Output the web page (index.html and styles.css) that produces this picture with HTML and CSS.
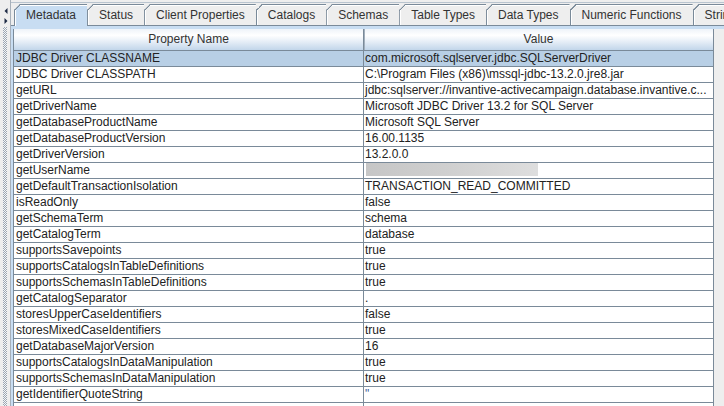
FILE: index.html
```html
<!DOCTYPE html>
<html>
<head>
<meta charset="utf-8">
<link rel="stylesheet" href="styles.css">
</head>
<body>
<div class="app">
  <div class="splitter">
    <svg class="arrows" width="4" height="16" viewBox="0 0 4 16">
      <path d="M3.5 0 L0.5 3 L3.5 6 Z" fill="#1e2b45"/>
      <path d="M0.5 10 L3.5 13 L0.5 16 Z" fill="#1e2b45"/>
    </svg>
    <div class="bumps"></div>
  </div>
  <div class="tabpane">
    <div class="tabs">
      <div class="tab selected">Metadata</div>
      <div class="tab">Status</div>
      <div class="tab">Client Properties</div>
      <div class="tab">Catalogs</div>
      <div class="tab">Schemas</div>
      <div class="tab">Table Types</div>
      <div class="tab">Data Types</div>
      <div class="tab">Numeric Functions</div>
      <div class="tab">String Functions</div>
    </div>
    <div class="content">
      <div class="viewport">
        <div class="grid">
          <div class="head">
            <div class="hcell">Property Name</div>
            <div class="hcell">Value</div>
          </div>
          <div class="row sel"><div class="cell">JDBC Driver CLASSNAME</div><div class="cell">com.microsoft.sqlserver.jdbc.SQLServerDriver</div></div>
          <div class="row"><div class="cell">JDBC Driver CLASSPATH</div><div class="cell">C:\Program Files (x86)\mssql-jdbc-13.2.0.jre8.jar</div></div>
          <div class="row"><div class="cell">getURL</div><div class="cell">jdbc:sqlserver://invantive-activecampaign.database.invantive.c...</div></div>
          <div class="row"><div class="cell">getDriverName</div><div class="cell">Microsoft JDBC Driver 13.2 for SQL Server</div></div>
          <div class="row"><div class="cell">getDatabaseProductName</div><div class="cell">Microsoft SQL Server</div></div>
          <div class="row"><div class="cell">getDatabaseProductVersion</div><div class="cell">16.00.1135</div></div>
          <div class="row"><div class="cell">getDriverVersion</div><div class="cell">13.2.0.0</div></div>
          <div class="row"><div class="cell">getUserName</div><div class="cell"><span class="redact"></span></div></div>
          <div class="row"><div class="cell">getDefaultTransactionIsolation</div><div class="cell">TRANSACTION_READ_COMMITTED</div></div>
          <div class="row"><div class="cell">isReadOnly</div><div class="cell">false</div></div>
          <div class="row"><div class="cell">getSchemaTerm</div><div class="cell">schema</div></div>
          <div class="row"><div class="cell">getCatalogTerm</div><div class="cell">database</div></div>
          <div class="row"><div class="cell">supportsSavepoints</div><div class="cell">true</div></div>
          <div class="row"><div class="cell">supportsCatalogsInTableDefinitions</div><div class="cell">true</div></div>
          <div class="row"><div class="cell">supportsSchemasInTableDefinitions</div><div class="cell">true</div></div>
          <div class="row"><div class="cell">getCatalogSeparator</div><div class="cell">.</div></div>
          <div class="row"><div class="cell">storesUpperCaseIdentifiers</div><div class="cell">false</div></div>
          <div class="row"><div class="cell">storesMixedCaseIdentifiers</div><div class="cell">true</div></div>
          <div class="row"><div class="cell">getDatabaseMajorVersion</div><div class="cell">16</div></div>
          <div class="row"><div class="cell">supportsCatalogsInDataManipulation</div><div class="cell">true</div></div>
          <div class="row"><div class="cell">supportsSchemasInDataManipulation</div><div class="cell">true</div></div>
          <div class="row"><div class="cell">getIdentifierQuoteString</div><div class="cell quote">"</div></div>
          <div class="row"><div class="cell"></div><div class="cell"></div></div>
        </div>
      </div>
    </div>
  </div>
</div>
</body>
</html>
```
FILE: styles.css
```css
* { box-sizing: border-box; }
html, body { margin: 0; padding: 0; }
body {
  width: 724px;
  height: 406px;
  overflow: hidden;
  background: #eeeeee;
  font-family: "Liberation Sans", Arial, sans-serif;
  font-size: 12px;
  color: #222222;
}
.app { display: flex; height: 406px; }

.splitter {
  flex: none;
  width: 11px;
  border-right: 1px solid #a7b0ba;
  padding: 8px 0 0 4px;
  display: flex;
  flex-direction: column;
}
.arrows { display: block; flex: none; }
.bumps {
  flex: 1;
  width: 4px;
  margin: 3px 0 0 -1px;
  background: repeating-conic-gradient(#9aa6b3 0 25%, #f6f6f6 0 50%) 0 0 / 2px 2px;
}

.tabpane {
  flex: 1;
  min-width: 0;
  margin-top: 2px;
  border-top: 1px solid #b9c4cf;
  display: flex;
  flex-direction: column;
}
.tabs {
  flex: none;
  display: flex;
  height: 22px;
  padding: 1px 0 0 3px;
  overflow-x: clip;
}
.tab {
  flex: none;
  position: relative;
  height: 21px;
  padding: 1px 11px 0 11px;
  line-height: 19px;
  border: 1px solid #7a8a99;
  border-bottom: none;
  border-right: none;
  background: #eeeeee;
  color: #333333;
  white-space: nowrap;
  box-shadow: inset 1px 1px 0 #ffffff;
  clip-path: polygon(6px 0, 100% 0, 100% 100%, 0 100%, 0 6px);
}
.tab::before {
  content: "";
  position: absolute;
  left: -1px;
  top: -1px;
  width: 8px;
  height: 8px;
  background: linear-gradient(to bottom right, transparent 37.5%, #7a8a99 37.5%, #7a8a99 46%, transparent 46%);
}
.tab.selected {
  background: #c8ddf2;
  height: 22px;
  margin-bottom: -1px;
  z-index: 1;
}

.content {
  flex: 1;
  min-height: 0;
  border-top: 1px solid #7a8a99;
  padding: 3px 0 0 2px;
  background: #c8ddf2;
}
.viewport {
  height: 100%;
  background: #eeeeee;
  overflow: hidden;
}
.grid {
  width: 701px;
  border-left: 1px solid #7a8a99;
  background: #ffffff;
}
.head {
  display: grid;
  grid-template-columns: 350px 350px;
  height: 22px;
  border-bottom: 1px solid #7a8a99;
  background: linear-gradient(#eef3f9 0%, #ffffff 30%, #e6eef7 60%, #c2d6ea 100%);
}
.hcell {
  text-align: center;
  line-height: 21px;
  color: #333333;
  border-right: 1px solid #7a8a99;
}
.hcell + .hcell { box-shadow: inset 1px 0 0 #a3b0bd; }

.row {
  display: grid;
  grid-template-columns: 350px 350px;
  height: 16px;
}
.row.sel { background: #b8cfe5; }
.cell {
  height: 16px;
  line-height: 15px;
  padding-left: 2px;
  border-right: 1px solid #7a8a99;
  border-bottom: 1px solid #7a8a99;
  white-space: nowrap;
  overflow: hidden;
}
.cell + .cell { padding-left: 1px; }
.quote { color: #3a5a9a; }
.redact {
  display: inline-block;
  vertical-align: top;
  width: 172px;
  height: 13px;
  margin-left: 1px;
  background: linear-gradient(90deg, #c6c6c6 0%, #d0d0d0 50%, #dedede 100%);
}
```
